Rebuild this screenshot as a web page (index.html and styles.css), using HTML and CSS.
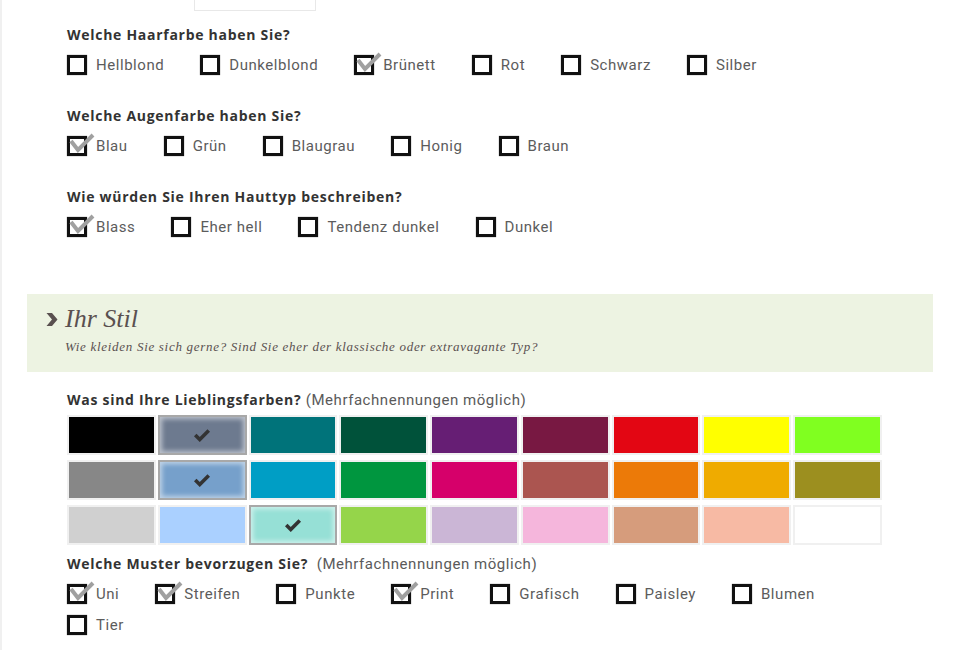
FILE: index.html
```html
<!DOCTYPE html>
<html>
<head>
    <title>Stilprofil</title>
    <link rel="stylesheet" href="styles.css">
</head>
<body>
<div class="page">
    <div class="top-box"></div>

    <div class="block">
        <div class="question">
            <div class="q-title">Welche Haarfarbe haben Sie?</div>
            <div class="options">
                <label class="opt"><span class="box"></span>Hellblond</label>
                <label class="opt"><span class="box"></span>Dunkelblond</label>
                <label class="opt"><span class="box checked"><svg viewBox="0 0 28 22"><path d="M3 8 L10 17 L25 2"/></svg></span>Brünett</label>
                <label class="opt"><span class="box"></span>Rot</label>
                <label class="opt"><span class="box"></span>Schwarz</label>
                <label class="opt"><span class="box"></span>Silber</label>
            </div>
        </div>

        <div class="question">
            <div class="q-title">Welche Augenfarbe haben Sie?</div>
            <div class="options">
                <label class="opt"><span class="box checked"><svg viewBox="0 0 28 22"><path d="M3 8 L10 17 L25 2"/></svg></span>Blau</label>
                <label class="opt"><span class="box"></span>Grün</label>
                <label class="opt"><span class="box"></span>Blaugrau</label>
                <label class="opt"><span class="box"></span>Honig</label>
                <label class="opt"><span class="box"></span>Braun</label>
            </div>
        </div>

        <div class="question">
            <div class="q-title">Wie würden Sie Ihren Hauttyp beschreiben?</div>
            <div class="options">
                <label class="opt"><span class="box checked"><svg viewBox="0 0 28 22"><path d="M3 8 L10 17 L25 2"/></svg></span>Blass</label>
                <label class="opt"><span class="box"></span>Eher hell</label>
                <label class="opt"><span class="box"></span>Tendenz dunkel</label>
                <label class="opt"><span class="box"></span>Dunkel</label>
            </div>
        </div>
    </div>

    <div class="section-head">
        <div class="sh-title">
            <svg class="chev" viewBox="0 0 12 15"><path d="M0.5 1 L6 1 L11.5 7.5 L6 14 L0.5 14 L6 7.5 Z"/></svg>
            Ihr Stil
        </div>
        <div class="sh-sub">Wie kleiden Sie sich gerne? Sind Sie eher der klassische oder extravagante Typ?</div>
    </div>

    <div class="block">
        <div class="q-title colors-title">Was sind Ihre Lieblingsfarben? <span class="hint">(Mehrfachnennungen möglich)</span></div>
        <div class="swatches">
            <div class="sw" style="background:#000000"></div>
            <div class="sw sel" style="background:#6d7a8f"><svg viewBox="0 0 16 12"><path d="M2 6 L6 10 L14 2"/></svg></div>
            <div class="sw" style="background:#00737a"></div>
            <div class="sw" style="background:#00523a"></div>
            <div class="sw" style="background:#661e74"></div>
            <div class="sw" style="background:#781842"></div>
            <div class="sw" style="background:#e30613"></div>
            <div class="sw" style="background:#ffff00"></div>
            <div class="sw" style="background:#80ff20"></div>

            <div class="sw" style="background:#878787"></div>
            <div class="sw sel" style="background:#76a0cb"><svg viewBox="0 0 16 12"><path d="M2 6 L6 10 L14 2"/></svg></div>
            <div class="sw" style="background:#009ec5"></div>
            <div class="sw" style="background:#00963f"></div>
            <div class="sw" style="background:#d6006a"></div>
            <div class="sw" style="background:#ab5550"></div>
            <div class="sw" style="background:#ec7a08"></div>
            <div class="sw" style="background:#efab00"></div>
            <div class="sw" style="background:#9c8f1f"></div>

            <div class="sw" style="background:#d0d0d0"></div>
            <div class="sw" style="background:#aad0ff"></div>
            <div class="sw sel" style="background:#96e0d6"><svg viewBox="0 0 16 12"><path d="M2 6 L6 10 L14 2"/></svg></div>
            <div class="sw" style="background:#95d54a"></div>
            <div class="sw" style="background:#cbb6d6"></div>
            <div class="sw" style="background:#f5b6dc"></div>
            <div class="sw" style="background:#d69c7c"></div>
            <div class="sw" style="background:#f7baa4"></div>
            <div class="sw" style="background:#ffffff"></div>
        </div>

        <div class="question q-last">
            <div class="q-title">Welche Muster bevorzugen Sie? <span class="hint">&nbsp;(Mehrfachnennungen möglich)</span></div>
            <div class="options">
                <label class="opt"><span class="box checked"><svg viewBox="0 0 28 22"><path d="M3 8 L10 17 L25 2"/></svg></span>Uni</label>
                <label class="opt"><span class="box checked"><svg viewBox="0 0 28 22"><path d="M3 8 L10 17 L25 2"/></svg></span>Streifen</label>
                <label class="opt"><span class="box"></span>Punkte</label>
                <label class="opt"><span class="box checked"><svg viewBox="0 0 28 22"><path d="M3 8 L10 17 L25 2"/></svg></span>Print</label>
                <label class="opt"><span class="box"></span>Grafisch</label>
                <label class="opt"><span class="box"></span>Paisley</label>
                <label class="opt"><span class="box"></span>Blumen</label>
                <label class="opt"><span class="box"></span>Tier</label>
            </div>
        </div>
    </div>
</div>
</body>
</html>
```

FILE: styles.css
```css
body {
    margin: 0;
    background: #fff;
    font-family: Roboto, "Liberation Sans", sans-serif;
    color: #555;
}
.page {
    border-left: 2px solid #f0f0f0;
    min-height: 650px;
    box-sizing: border-box;
}
.top-box {
    margin-left: 192px;
    width: 122px;
    height: 11px;
    border: 1px solid #e8e8e8;
    border-top: none;
    box-sizing: border-box;
}
.block {
    padding-left: 65px;
    width: 815px;
}
.question {
    margin-top: 14px;
}
.question + .question {
    margin-top: 31px;
}
.q-title {
    font-family: "Open Sans", Lato, sans-serif;
    font-weight: bold;
    font-size: 14px;
    letter-spacing: 0.72px;
    line-height: 20px;
    color: #333;
    margin-bottom: 10px;
}
.hint {
    font-family: Roboto, sans-serif;
    font-weight: normal;
    font-size: 15px;
    letter-spacing: 0.55px;
    color: #5a5a5a;
}
.options {
    display: flex;
    flex-wrap: wrap;
    column-gap: 36px;
    row-gap: 11px;
}
.opt {
    display: flex;
    align-items: center;
    font-size: 15px;
    line-height: 20px;
    letter-spacing: 0.55px;
    color: #5c5c5c;
}
.box {
    position: relative;
    width: 20px;
    height: 20px;
    box-sizing: border-box;
    border: 3px solid #111;
    box-shadow: 0 0 1px #666;
    margin-right: 9px;
    background: #fff;
}
.box svg {
    position: absolute;
    left: -2px;
    top: -6px;
    width: 28px;
    height: 22px;
}
.box svg path {
    fill: none;
    stroke: #a0a0a0;
    stroke-width: 4;
}
.section-head {
    margin: 57px 24px 0 25px;
    height: 78px;
    box-sizing: border-box;
    background: #edf3e2;
    padding: 10px 0 0 19px;
    color: #5a5050;
    font-family: "Liberation Serif", serif;
    font-style: italic;
}
.sh-title {
    display: flex;
    align-items: center;
    font-size: 26px;
    line-height: 30px;
}
.chev {
    width: 12px;
    height: 15px;
    margin-right: 7px;
    fill: #5a5050;
}
.sh-sub {
    padding-left: 19px;
    margin-top: 5px;
    font-size: 13px;
    letter-spacing: 0.7px;
}
.colors-title {
    margin-top: 18px;
    margin-bottom: 5px;
}
.swatches {
    display: grid;
    grid-template-columns: repeat(9, 1fr);
    gap: 5px 2px;
}
.sw {
    height: 40px;
    box-sizing: border-box;
    border: 2px solid #f0f0f0;
    display: flex;
    align-items: center;
    justify-content: center;
}
.sw.sel {
    border-color: #a8a8a8;
    box-shadow: inset 0 0 5px 2px rgba(255, 255, 255, 0.55);
}
.sw svg {
    width: 18px;
    height: 14px;
}
.sw svg path {
    fill: none;
    stroke: #333;
    stroke-width: 3.2;
}
.question.q-last {
    margin-top: 9px;
}
```
